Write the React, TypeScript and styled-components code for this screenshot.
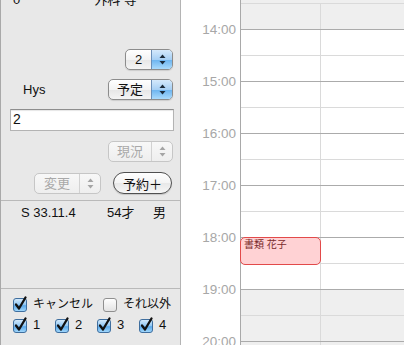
import React from "react";
import styled, { createGlobalStyle, css } from "styled-components";

const FONT = `"Liberation Sans", "Noto Sans CJK JP", sans-serif`;

const GlobalStyle = createGlobalStyle`
    html, body {
        margin: 0;
        padding: 0;
        background: #ffffff;
        overflow: hidden;
    }
    body {
        font-family: ${FONT};
        font-size: 13px;
        color: #111;
    }
`;

const Page = styled.div`
    display: flex;
    width: 404px;
    height: 345px;
    overflow: hidden;
`;

/* ---------- sidebar ---------- */

const Sidebar = styled.div`
    width: 181px;
    flex: none;
    box-sizing: border-box;
    display: flex;
    flex-direction: column;
    background: #e8e8e8;
    border-left: 1px solid #a9a9a9;
    border-right: 1px solid #b4b4b4;
`;

const ControlSection = styled.div`
    height: 201px;
    box-sizing: border-box;
    display: flex;
    flex-direction: column;
    padding: 0 7px 0 9px;
    border-bottom: 1px solid #b9b9b9;
`;

const TopRow = styled.div`
    display: flex;
    height: 16px;
    line-height: 16px;
    margin-top: -8px;
    padding-left: 3px;
`;

const TopValue = styled.span<{ $offset: number }>`
    margin-left: ${(p) => p.$offset}px;
`;

const ControlRow = styled.div<{ $top: number; $justify?: string }>`
    display: flex;
    align-items: center;
    justify-content: ${(p) => p.$justify || "flex-end"};
    gap: 12px;
    margin-top: ${(p) => p.$top}px;
`;

const FieldLabel = styled.span`
    margin-left: 13px;
    font-size: 13px;
`;

const PopUp = styled.div<{ $width: number; $disabled?: boolean }>`
    display: flex;
    width: ${(p) => p.$width}px;
    height: 21px;
    box-sizing: border-box;
    border-radius: 5px;
    overflow: hidden;
    font-size: 13px;
    ${(p) =>
        p.$disabled
            ? css`
                  border: 1px solid #c6c6c6;
                  background: linear-gradient(#f8f8f8, #eeeeee);
                  color: #a9a9a9;
              `
            : css`
                  border: 1px solid #8c8c8c;
                  background: linear-gradient(#ffffff 0%, #f3f3f3 50%, #e6e6e6 51%, #f4f4f4 100%);
                  color: #111;
                  box-shadow: 0 1px 1px rgba(0, 0, 0, 0.12);
              `}
`;

const PopUpLabel = styled.span`
    flex: 1;
    display: flex;
    align-items: center;
    justify-content: center;
    line-height: 19px;
`;

const PopUpArrows = styled.span<{ $disabled?: boolean }>`
    width: 20px;
    flex: none;
    display: flex;
    align-items: center;
    justify-content: center;
    ${(p) =>
        p.$disabled
            ? css`
                  border-left: 1px solid #d2d2d2;
              `
            : css`
                  border-left: 1px solid #6b8fb8;
                  background: linear-gradient(#d5e9fb 0%, #a7d0f5 50%, #6ab3ef 51%, #a9dafc 100%);
              `}
`;

const TextField = styled.div`
    margin-top: 9px;
    width: 164px;
    height: 22px;
    box-sizing: border-box;
    background: #ffffff;
    border: 1px solid #b3b3b3;
    border-top-color: #8e8e8e;
    box-shadow: inset 0 1px 1px rgba(0, 0, 0, 0.1);
    padding: 0 2px;
    line-height: 19px;
    font-size: 14px;
`;

const PushButton = styled.div`
    width: 59px;
    height: 22px;
    box-sizing: border-box;
    display: flex;
    align-items: center;
    justify-content: center;
    border: 1px solid #505050;
    border-radius: 11px;
    background: linear-gradient(#ffffff 0%, #f4f4f4 50%, #e8e8e8 51%, #f6f6f6 100%);
    box-shadow: 0 1px 1px rgba(0, 0, 0, 0.15);
    font-size: 13px;
    margin-right: 1px;
`;

const InfoSection = styled.div`
    height: 88px;
    box-sizing: border-box;
    border-bottom: 1px solid #b9b9b9;
    padding: 4px 0 0 20px;
    display: grid;
    grid-template-columns: 86px 46px auto;
    align-content: start;
    line-height: 16px;
`;

const FilterSection = styled.div`
    display: flex;
    flex-direction: column;
    gap: 5px;
    padding: 7px 0 0 12px;
`;

const FilterRow = styled.div<{ $columns: string }>`
    display: grid;
    grid-template-columns: ${(p) => p.$columns};
    height: 16px;
`;

const CheckItem = styled.label`
    display: flex;
    align-items: center;
    gap: 5px;
    font-size: 13px;
    white-space: nowrap;
`;

const CheckLabel = styled.span<{ $cjk?: boolean }>`
    font-size: ${(p) => (p.$cjk ? "12px" : "13px")};
    line-height: 16px;
`;

/* ---------- calendar ---------- */

const Calendar = styled.div`
    flex: 1;
    display: flex;
    background: #ffffff;
`;

const TimeColumn = styled.div`
    width: 59px;
    flex: none;
    padding-top: 3px;
`;

const TimeLabel = styled.div`
    height: 52px;
    display: flex;
    align-items: center;
    justify-content: flex-end;
    padding-right: 4px;
    font-size: 13.5px;
    color: #a7a7a7;
`;

const Grid = styled.div`
    flex: 1;
    border-left: 1px solid #a9a9a9;
    background: #efefef;
    padding-top: 3px;
`;

const Slot = styled.div<{ $hour: boolean; $open: boolean }>`
    display: flex;
    height: 26px;
    box-sizing: border-box;
    border-top: 1px solid ${(p) => (p.$hour ? "#ababab" : "#dadada")};
    background: ${(p) => (p.$open ? "#ffffff" : "transparent")};
`;

const Cell = styled.div`
    position: relative;
    width: 79px;
    flex: none;
    border-right: 1px solid #dadada;

    & + & {
        flex: 1;
        border-right: none;
    }
`;

const Event = styled.div`
    position: absolute;
    top: -1px;
    left: -1px;
    width: 81px;
    height: 28px;
    box-sizing: border-box;
    border: 1px solid #e24a4a;
    border-radius: 5px;
    background: #ffd2d4;
    color: #7a2b2b;
    font-size: 10px;
    line-height: 13px;
    padding: 0 3px;
    z-index: 1;
`;

const Arrows: React.FC<{ color: string }> = ({ color }) => (
    <svg width="7" height="11" viewBox="0 0 7 11">
        <path d="M3.5 0.5 L6.5 4 L0.5 4 Z" fill={color} />
        <path d="M3.5 10.5 L6.5 7 L0.5 7 Z" fill={color} />
    </svg>
);

const Checkbox: React.FC<{ checked: boolean }> = ({ checked }) => (
    <svg width="15" height="15" viewBox="0 0 15 15" style={{ flex: "none", overflow: "visible" }}>
        <defs>
            <linearGradient id="cbBlue" x1="0" y1="0" x2="0" y2="1">
                <stop offset="0" stopColor="#d9ecfc" />
                <stop offset="0.5" stopColor="#8ec6f3" />
                <stop offset="0.55" stopColor="#5aa8ea" />
                <stop offset="1" stopColor="#a6dbfd" />
            </linearGradient>
            <linearGradient id="cbWhite" x1="0" y1="0" x2="0" y2="1">
                <stop offset="0" stopColor="#ffffff" />
                <stop offset="1" stopColor="#e2e2e2" />
            </linearGradient>
        </defs>
        <rect
            x="0.5"
            y="1.5"
            width="13"
            height="13"
            rx="2.5"
            fill={checked ? "url(#cbBlue)" : "url(#cbWhite)"}
            stroke={checked ? "#3f6e9e" : "#8f8f8f"}
        />
        {checked && (
            <path
                d="M3 7.5 L6 11.5 L12.5 0.5"
                fill="none"
                stroke="#111"
                strokeWidth="2.3"
                strokeLinecap="round"
                strokeLinejoin="round"
            />
        )}
    </svg>
);

const slots = Array.from({ length: 14 }, (_, i) => {
    // slot 0 starts at 13:30
    const minutes = 13 * 60 + 30 + i * 30;
    return {
        hour: minutes % 60 === 0,
        open: minutes >= 14 * 60 && minutes < 19 * 60,
        label: `${Math.floor(minutes / 60)}:00`,
        isEventStart: minutes === 18 * 60,
    };
});

const hours = ["14:00", "15:00", "16:00", "17:00", "18:00", "19:00", "20:00", "21:00"];

export default function App() {
    return (
        <>
            <GlobalStyle />
            <Page>
                <Sidebar>
                    <ControlSection>
                        <TopRow>
                            <span>0</span>
                            <TopValue $offset={74}>外科 等</TopValue>
                        </TopRow>
                        <ControlRow $top={41}>
                            <PopUp $width={48}>
                                <PopUpLabel>2</PopUpLabel>
                                <PopUpArrows>
                                    <Arrows color="#1b2a3a" />
                                </PopUpArrows>
                            </PopUp>
                        </ControlRow>
                        <ControlRow $top={9} $justify="space-between">
                            <FieldLabel>Hys</FieldLabel>
                            <PopUp $width={65}>
                                <PopUpLabel>予定</PopUpLabel>
                                <PopUpArrows>
                                    <Arrows color="#1b2a3a" />
                                </PopUpArrows>
                            </PopUp>
                        </ControlRow>
                        <TextField>2</TextField>
                        <ControlRow $top={10}>
                            <PopUp $width={65} $disabled>
                                <PopUpLabel>現況</PopUpLabel>
                                <PopUpArrows $disabled>
                                    <Arrows color="#a5a5a5" />
                                </PopUpArrows>
                            </PopUp>
                        </ControlRow>
                        <ControlRow $top={10}>
                            <PopUp $width={67} $disabled>
                                <PopUpLabel>変更</PopUpLabel>
                                <PopUpArrows $disabled>
                                    <Arrows color="#a5a5a5" />
                                </PopUpArrows>
                            </PopUp>
                            <PushButton>予約＋</PushButton>
                        </ControlRow>
                    </ControlSection>
                    <InfoSection>
                        <span>S 33.11.4</span>
                        <span>54才</span>
                        <span>男</span>
                    </InfoSection>
                    <FilterSection>
                        <FilterRow $columns="90px auto">
                            <CheckItem>
                                <Checkbox checked />
                                <CheckLabel $cjk>キャンセル</CheckLabel>
                            </CheckItem>
                            <CheckItem>
                                <Checkbox checked={false} />
                                <CheckLabel $cjk>それ以外</CheckLabel>
                            </CheckItem>
                        </FilterRow>
                        <FilterRow $columns="42px 42px 42px 42px">
                            {["1", "2", "3", "4"].map((n) => (
                                <CheckItem key={n}>
                                    <Checkbox checked />
                                    <CheckLabel>{n}</CheckLabel>
                                </CheckItem>
                            ))}
                        </FilterRow>
                    </FilterSection>
                </Sidebar>
                <Calendar>
                    <TimeColumn>
                        {hours.map((h) => (
                            <TimeLabel key={h}>{h}</TimeLabel>
                        ))}
                    </TimeColumn>
                    <Grid>
                        {slots.map((s, i) => (
                            <Slot key={i} $hour={s.hour} $open={s.open}>
                                <Cell>{s.isEventStart && <Event>書類 花子</Event>}</Cell>
                                <Cell />
                            </Slot>
                        ))}
                    </Grid>
                </Calendar>
            </Page>
        </>
    );
}
